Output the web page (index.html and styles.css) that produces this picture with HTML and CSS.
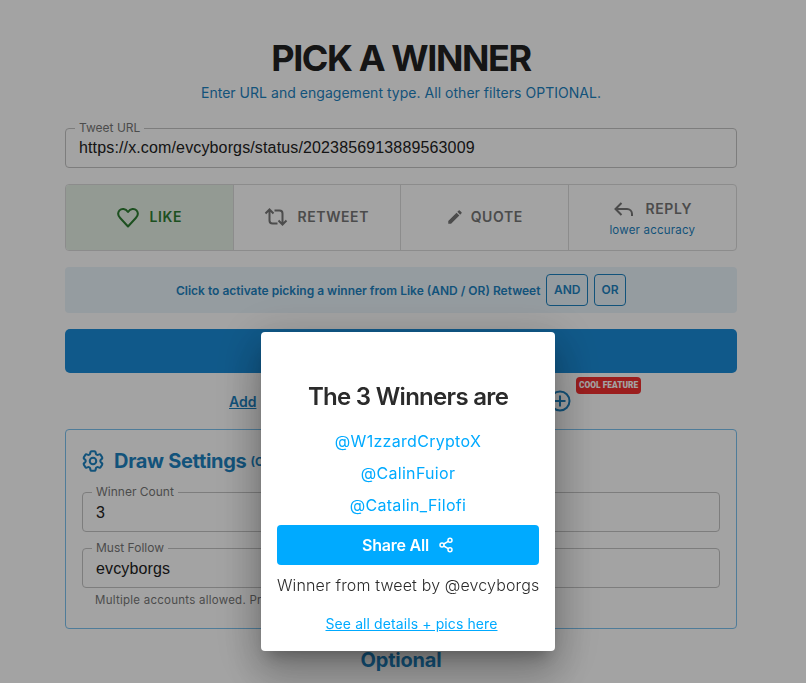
FILE: index.html
```html
<!DOCTYPE html>
<html lang="en">
<head>
  <meta charset="UTF-8" />
  <meta name="viewport" content="width=device-width, initial-scale=1.0"/>
  <title>Pick a Winner</title>
  <link rel="stylesheet" href="styles.css">
</head>
<body>
  <div class="container">
    <h1>PICK A WINNER</h1>
    <p class="subtitle">Enter URL and engagement type. All other filters OPTIONAL.</p>

    <fieldset class="field">
      <legend>Tweet URL</legend>
      <div class="field-value">https://x.com/evcyborgs/status/2023856913889563009</div>
    </fieldset>

    <div class="tabs">
      <div class="tab tab-active">
        <div class="tab-row">
          <svg width="24" height="24" viewBox="0 0 24 24" fill="none" stroke="currentColor" stroke-width="2" stroke-linejoin="round"><path d="M12 21.500 4.200 13C2 10.600 1.700 7.500 3.500 5.400 5.500 3.200 9.500 3.300 12 7c2.500-3.700 6.500-3.800 8.500-1.600 1.800 2.100 1.500 5.200-.7 7.600z"/></svg>
          <span>LIKE</span>
        </div>
      </div>
      <div class="tab">
        <div class="tab-row">
          <svg width="24" height="24" viewBox="0 0 24 24" fill="none" stroke="currentColor" stroke-width="2"><path d="M1.500 8.500 5.500 4.500l4 4M5.500 5v10.500a3 3 0 0 0 3 3h5M22.500 15.500l-4 4-4-4M18.500 19V8.500a3 3 0 0 0-3-3h-5"/></svg>
          <span>RETWEET</span>
        </div>
      </div>
      <div class="tab">
        <div class="tab-row tab-row-tight">
          <svg width="18" height="18" viewBox="0 0 24 24" fill="currentColor"><path d="M3 17.250V21h3.750L17.810 9.940l-3.750-3.750zM20.710 7.040a1 1 0 0 0 0-1.410l-2.340-2.340a1 1 0 0 0-1.410 0l-1.830 1.830 3.750 3.750z"/></svg>
          <span>QUOTE</span>
        </div>
      </div>
      <div class="tab">
        <div class="tab-row">
          <svg width="24" height="24" viewBox="0 0 24 24" fill="none" stroke="currentColor" stroke-width="2"><path d="M9.500 6 3.500 12l6 6M4 12h11a5 5 0 0 1 5 5v2"/></svg>
          <span>REPLY</span>
        </div>
        <div class="tab-note">lower accuracy</div>
      </div>
    </div>

    <div class="combine">
      <span>Click to activate picking a winner from Like (AND / OR) Retweet</span>
      <span class="combine-btn">AND</span>
      <span class="combine-btn">OR</span>
    </div>

    <div class="pick-btn"></div>

    <div class="add-row">
      <a href="#" class="add-link">Add</a>
      <svg class="add-icon" width="24" height="24" viewBox="0 0 24 24" fill="none" stroke="currentColor" stroke-width="2"><circle cx="12" cy="12" r="9.500"/><path d="M12 6.500v11M6.500 12h11"/></svg>
      <span class="badge">COOL FEATURE</span>
    </div>

    <div class="card">
      <div class="card-title">
        <svg class="gear" width="26" height="26" viewBox="0 0 24 24" fill="none" stroke="currentColor" stroke-width="1.900"><path d="M9.594 3.940c.09-.542.56-.94 1.110-.94h2.593c.55 0 1.020.398 1.110.94l.213 1.281c.063.374.313.686.645.870.074.04.147.083.22.127.325.196.72.257 1.075.124l1.217-.456a1.125 1.125 0 0 1 1.370.49l1.296 2.247a1.125 1.125 0 0 1-.26 1.431l-1.003.827c-.293.241-.438.613-.43.992a7.723 7.723 0 0 1 0 .255c-.008.378.137.75.43.991l1.004.827c.424.35.534.955.26 1.430l-1.298 2.247a1.125 1.125 0 0 1-1.369.491l-1.217-.456c-.355-.133-.75-.072-1.076.124a6.470 6.470 0 0 1-.22.128c-.331.183-.581.495-.644.869l-.213 1.281c-.09.543-.56.94-1.110.94h-2.594c-.55 0-1.019-.398-1.110-.94l-.213-1.281c-.062-.374-.312-.686-.644-.87a6.520 6.520 0 0 1-.22-.127c-.325-.196-.72-.257-1.076-.124l-1.217.456a1.125 1.125 0 0 1-1.369-.49l-1.297-2.247a1.125 1.125 0 0 1 .26-1.431l1.004-.827c.292-.24.437-.613.43-.991a6.932 6.932 0 0 1 0-.255c.007-.38-.138-.751-.43-.992l-1.004-.827a1.125 1.125 0 0 1-.26-1.430l1.297-2.247a1.125 1.125 0 0 1 1.370-.491l1.216.456c.356.133.751.072 1.076-.124.072-.044.146-.086.22-.128.332-.183.582-.495.644-.869l.214-1.280z"/><circle cx="12" cy="12" r="3"/></svg>
        <span class="card-heading">Draw Settings</span>
        <span class="card-sub">(Optional)</span>
      </div>
      <div class="card-row">
        <fieldset class="field">
          <legend>Winner Count</legend>
          <div class="field-value">3</div>
        </fieldset>
      </div>
      <div class="card-row">
        <fieldset class="field">
          <legend>Must Follow</legend>
          <div class="field-value">evcyborgs</div>
        </fieldset>
      </div>
      <p class="hint">Multiple accounts allowed. Press enter after each.</p>
    </div>

    <h3 class="optional">Optional</h3>
  </div>

  <div class="backdrop">
    <div class="modal">
      <h2>The 3 Winners are</h2>
      <a href="#" class="winner">@W1zzardCryptoX</a>
      <a href="#" class="winner">@CalinFuior</a>
      <a href="#" class="winner">@Catalin_Filofi</a>
      <div class="share">
        <span>Share All</span>
        <svg width="16" height="16" viewBox="0 0 24 24" fill="none" stroke="currentColor" stroke-width="2.200"><circle cx="18" cy="5" r="3"/><circle cx="6" cy="12" r="3"/><circle cx="18" cy="19" r="3"/><path d="M8.600 10.500 15.400 6.500M8.600 13.500l6.800 4"/></svg>
      </div>
      <p class="from">Winner from tweet by @evcyborgs</p>
      <a href="#" class="details">See all details + pics here</a>
    </div>
  </div>
</body>
</html>
```

FILE: styles.css
```css
html, body {
  height: 100%;
  overflow: hidden;
}
body {
  margin: 0;
  font-family: Inter, sans-serif;
  background-color: #fff;
  color: #222;
}
.container {
  width: 672px;
  margin-left: 65px;
  padding-top: 35px;
}
h1 {
  margin: 0;
  font-size: 36px;
  line-height: 46px;
  font-weight: 700;
  letter-spacing: -1.4px;
  text-align: center;
  color: #222;
}
.subtitle {
  margin: 2px 0 0;
  font-size: 14px;
  line-height: 20px;
  letter-spacing: 0.03px;
  text-align: center;
  color: #1d82c0;
}
.field {
  margin: 0;
  padding: 0 13px;
  height: 46px;
  box-sizing: border-box;
  border: 1px solid #c4c4c4;
  border-radius: 4px;
  min-width: 0;
}
.container > .field {
  margin-top: 19px;
}
.field legend {
  padding: 0 4px;
  margin-left: -4px;
  font-size: 12px;
  line-height: 12px;
  color: #777;
}
.field-value {
  font-family: "Liberation Sans", Arial, sans-serif;
  font-size: 16px;
  line-height: 26px;
  margin-top: 1px;
  letter-spacing: 0.14px;
  color: #222;
}
.card-row .field-value {
  margin-top: 2px;
}
.tabs {
  display: grid;
  grid-template-columns: repeat(4, 1fr);
  height: 67px;
  margin-top: 16px;
  box-sizing: border-box;
  border: 1px solid #dcdcdc;
  border-radius: 4px;
  overflow: hidden;
}
.tab {
  display: flex;
  flex-direction: column;
  align-items: center;
  justify-content: center;
  padding-bottom: 2px;
  border-right: 1px solid #dcdcdc;
  color: #777;
  font-size: 14px;
  font-weight: 600;
  letter-spacing: 0.6px;
}
.tab:last-child {
  border-right: 0;
}
.tab-active {
  background-color: #e6f1e7;
  color: #2e7d32;
}
.tab-row {
  display: flex;
  align-items: center;
  gap: 9px;
}
.tab-row-tight {
  gap: 7px;
}
.tab-note {
  margin-top: 2px;
  font-size: 11.500px;
  font-weight: 400;
  letter-spacing: 0.2px;
  color: #1d82c0;
}
.combine {
  display: flex;
  align-items: center;
  justify-content: center;
  gap: 6px;
  height: 46px;
  margin-top: 16px;
  border-radius: 4px;
  background-color: #eaf4fa;
  color: #1d82c0;
  font-size: 12px;
  font-weight: 600;
}
.combine-btn {
  padding: 0 6.500px;
  height: 30px;
  line-height: 30px;
  border: 1px solid #1d82c0;
  border-radius: 4px;
}
.pick-btn {
  height: 44px;
  margin-top: 16px;
  border-radius: 5px;
  background-color: #1a8cd8;
}
.add-row {
  position: relative;
  display: flex;
  align-items: center;
  gap: 4px;
  height: 56px;
  padding-left: 164px;
}
.add-link {
  display: block;
  width: 315px;
  color: #1d82c0;
  font-size: 14px;
  font-weight: 600;
}
.add-icon {
  color: #1d82c0;
}
.badge {
  position: absolute;
  left: 511px;
  top: 4px;
  padding: 0 3px;
  height: 17px;
  line-height: 16px;
  border-radius: 4px;
  background-color: #f23030;
  color: #fff;
  font-family: Roboto, sans-serif;
  font-size: 8.400px;
  font-weight: 900;
  white-space: nowrap;
}
.card {
  height: 200px;
  box-sizing: border-box;
  padding: 16px 16px 0;
  border: 1px solid #7cc2ef;
  border-radius: 4px;
}
.card-title {
  display: flex;
  align-items: center;
  gap: 8px;
  height: 30px;
  color: #1d82c0;
}
.gear {
  margin-left: -2px;
}
.card-heading {
  font-size: 20px;
  font-weight: 700;
  letter-spacing: -0.3px;
}
.card-sub {
  margin-left: -4px;
  font-size: 12px;
  font-weight: 700;
}
.card-row {
  margin-top: 10px;
}
.hint {
  margin: 4px 0 0 13px;
  font-size: 11.500px;
  line-height: 16px;
  letter-spacing: 0.25px;
  color: #777;
  white-space: nowrap;
}
.optional {
  margin: 19px 0 0;
  font-size: 20px;
  line-height: 24px;
  font-weight: 700;
  letter-spacing: -0.2px;
  text-align: center;
  color: #1d82c0;
}
.backdrop {
  position: fixed;
  inset: 0;
  background-color: rgba(0, 0, 0, 0.36);
}
.modal {
  position: absolute;
  left: 261px;
  top: 332px;
  width: 294px;
  height: 319px;
  box-sizing: border-box;
  padding: 0 16px;
  border-radius: 4px;
  background-color: #fff;
  box-shadow: 0 11px 15px -7px rgba(0,0,0,0.25), 0 24px 38px 3px rgba(0,0,0,0.18), 0 9px 46px 8px rgba(0,0,0,0.16);
  text-align: center;
}
.modal h2 {
  margin: 50px 0 13px;
  font-size: 24px;
  line-height: 30px;
  font-weight: 600;
  letter-spacing: -0.7px;
  color: #2b2b2b;
}
.winner {
  display: block;
  height: 32px;
  line-height: 32px;
  font-size: 16px;
  letter-spacing: 0.3px;
  color: #00aaff;
  text-decoration: none;
}
.share {
  display: flex;
  align-items: center;
  justify-content: center;
  gap: 9px;
  height: 40px;
  margin-top: 4px;
  border-radius: 4px;
  background-color: #00aaff;
  color: #fff;
  font-size: 16px;
  font-weight: 600;
  letter-spacing: -0.2px;
}
.from {
  margin: 10px 0 0;
  font-size: 16px;
  line-height: 20px;
  font-weight: 300;
  letter-spacing: 0.14px;
  color: #2b2b2b;
  white-space: nowrap;
}
.details {
  display: block;
  margin-top: 19px;
  padding-left: 7px;
  font-size: 14px;
  line-height: 20px;
  letter-spacing: 0.1px;
  color: #00aaff;
}
```
